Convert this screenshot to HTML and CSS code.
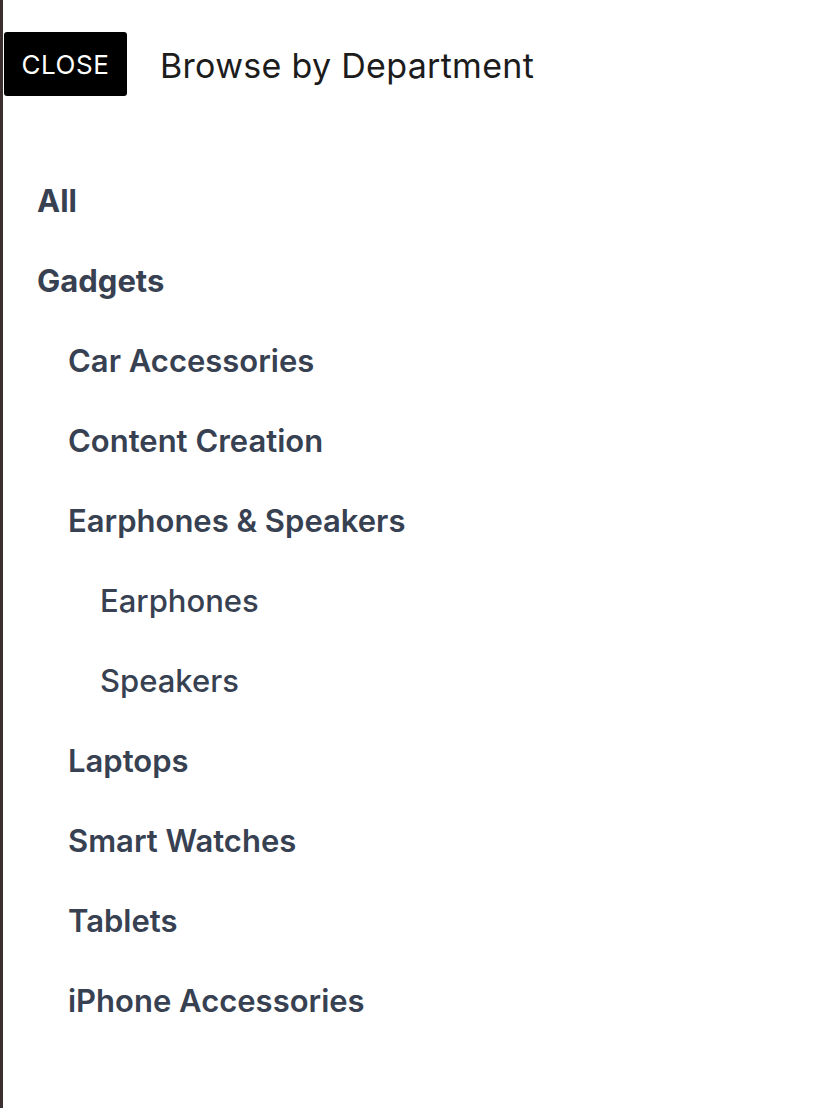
FILE: index.html
```html
<!DOCTYPE html>
<html>
<head>
<meta charset="utf-8">
<link rel="stylesheet" href="styles.css">
</head>
<body>
<div class="panel">
  <header class="head">
    <button class="close">CLOSE</button>
    <h1 class="title">Browse by Department</h1>
  </header>
  <ul class="dept">
    <li class="l1">All</li>
    <li class="l1">Gadgets</li>
    <li class="l2">Car Accessories</li>
    <li class="l2">Content Creation</li>
    <li class="l2">Earphones &amp; Speakers</li>
    <li class="l3">Earphones</li>
    <li class="l3">Speakers</li>
    <li class="l2">Laptops</li>
    <li class="l2">Smart Watches</li>
    <li class="l2">Tablets</li>
    <li class="l2">iPhone Accessories</li>
  </ul>
</div>
</body>
</html>
```
FILE: styles.css
```css
html, body {
  margin: 0;
  height: 100%;
  background: #ffffff;
}
body {
  font-family: Inter, "Noto Sans", sans-serif;
}
.panel {
  min-height: 100%;
  box-sizing: border-box;
  border-left: 3px solid #3b2f30;
  padding-top: 32px;
}
.head {
  display: flex;
  align-items: center;
  gap: 33px;
  padding-left: 1px;
}
.close {
  height: 64px;
  width: 123px;
  background: #000;
  color: #fff;
  border: 0;
  border-radius: 3px;
  font-family: Inter, sans-serif;
  font-size: 26px;
  letter-spacing: 0.6px;
  padding: 0;
}
.title {
  margin: 0;
  font-size: 34px;
  font-weight: 400;
  color: #1c1c1c;
  letter-spacing: 0.3px;
  padding-top: 3px;
}
.dept {
  list-style: none;
  margin: 65px 0 0;
  padding: 0;
  color: #374151;
  font-size: 31px;
}
.dept li {
  height: 80px;
  line-height: 80px;
}
.l1 { padding-left: 34px; font-weight: 700; }
.l2 { padding-left: 65px; font-weight: 600; }
.l3 { padding-left: 97px; font-weight: 500; }
```
